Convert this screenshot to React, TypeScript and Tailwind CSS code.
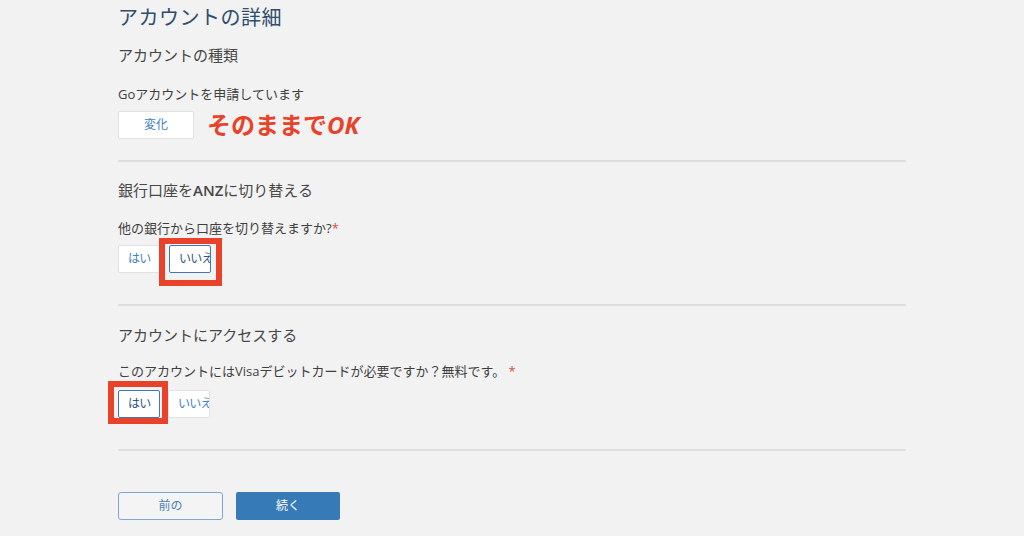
import React from "react";

const font = { fontFamily: '"Open Sans", "Noto Sans CJK JP", sans-serif' };

function Opt({ label, selected, w, box }: { label: string; selected?: boolean; w: string; box?: string }) {
  return (
    <div className="relative">
      <div
        className={
          "h-[28px] overflow-hidden whitespace-nowrap rounded-[2px] bg-white text-[12px] leading-[26px] tracking-[-0.8px] " +
          w +
          (selected
            ? " border-[1.5px] border-[#3f79b3] text-[#2c5580] pl-[9px]"
            : " border border-[#e2e2e2] text-[#3f7fc0] pl-[9px]")
        }
      >
        {label}
      </div>
      {box && <div className={"absolute border-[6px] border-[#e8422a] " + box} />}
    </div>
  );
}

export default function App() {
  return (
    <div className="w-[1024px] h-[536px] bg-[#f2f2f2] overflow-hidden" style={font}>
      <div className="ml-[118px] w-[788px] flex flex-col">
        <h1 className="pt-[3px] text-[20px] leading-[30px] tracking-[0.5px] text-[#2f4d6c]">アカウントの詳細</h1>
        <h2 className="mt-[12px] text-[15px] leading-[20px] text-[#474747]">アカウントの種類</h2>
        <p className="mt-[20px] text-[13px] leading-[18px] text-[#3f3f3f]">Goアカウントを申請しています</p>
        <div className="mt-[8px] flex items-center">
          <div className="w-[76px] h-[28px] rounded-[2px] border border-[#e2e2e2] bg-white text-center text-[12px] leading-[26px] text-[#3f7fc0]">
            変化
          </div>
          <span className="ml-[13px] text-[24px] font-bold leading-[28px] text-[#e8422a]">
            そのままで<i>OK</i>
          </span>
        </div>
        <div className="mt-[21px] h-[2px] bg-[#dedede]" />

        <h2 className="mt-[18px] text-[15px] leading-[20px] text-[#474747]">
          銀行口座を<b className="font-semibold">ANZ</b>に切り替える
        </h2>
        <p className="mt-[19px] text-[13px] leading-[18px] text-[#3f3f3f]">
          他の銀行から口座を切り替えますか?<span className="text-[#e04a3a]">*</span>
        </p>
        <div className="mt-[8px] flex gap-[7px]">
          <Opt label="はい" w="w-[44px]" />
          <Opt label="いいえ" w="w-[42px]" selected box="left-[-10px] top-[-7px] w-[63px] h-[48px]" />
        </div>
        <div className="mt-[31px] h-[2px] bg-[#dedede]" />

        <h2 className="mt-[19px] text-[15px] leading-[20px] text-[#474747]">アカウントにアクセスする</h2>
        <p className="mt-[17px] text-[13px] leading-[18px] text-[#3f3f3f]">
          このアカウントにはVisaデビットカードが必要ですか？無料です。 <span className="text-[#e04a3a]">*</span>
        </p>
        <div className="mt-[10px] flex gap-[8px]">
          <Opt label="はい" w="w-[42px]" selected box="left-[-10px] top-[-9px] w-[60px] h-[43px]" />
          <Opt label="いいえ" w="w-[42px]" />
        </div>
        <div className="mt-[31px] h-[2px] bg-[#dedede]" />

        <div className="mt-[41px] flex gap-[13px]">
          <div className="w-[105px] h-[28px] rounded-[3px] border border-[#7fa8d1] bg-[#f4f4f4] text-center text-[12px] leading-[26px] text-[#4a7fb5]">
            前の
          </div>
          <div className="w-[104px] h-[28px] rounded-[2px] bg-[#367bb8] text-center text-[12px] leading-[28px] text-white">
            続く
          </div>
        </div>
      </div>
    </div>
  );
}
